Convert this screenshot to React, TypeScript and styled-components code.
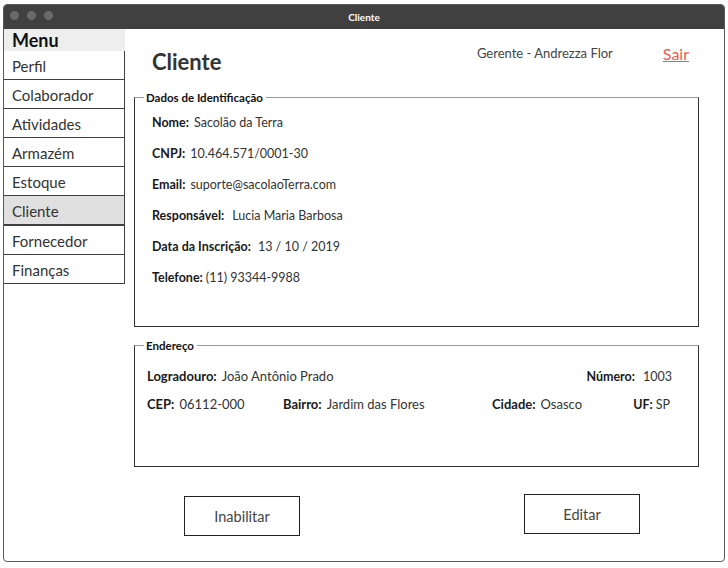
import React from "react";
import styled, { createGlobalStyle } from "styled-components";

const GlobalStyle = createGlobalStyle`
  body {
    margin: 0;
    background: #ffffff;
    font-family: "Lato", "Open Sans", sans-serif;
  }
`;

const Window = styled.div`
  margin: 4px 3px 0 3px;
  width: 722px;
  height: 558px;
  box-sizing: border-box;
  border: 1px solid #595959;
  border-radius: 4px;
  overflow: hidden;
  display: flex;
  flex-direction: column;
`;

const TitleBar = styled.div`
  height: 24px;
  flex-shrink: 0;
  background: #404040;
  display: flex;
  align-items: center;
  position: relative;
  justify-content: center;
  color: #ffffff;
  font-size: 10px;
  font-weight: 700;
`;

const Lights = styled.div`
  position: absolute;
  left: 6px;
  top: 6px;
  display: flex;
  gap: 8px;
`;

const Light = styled.span`
  width: 9px;
  height: 9px;
  border-radius: 50%;
  background: #6a6a6a;
`;

const Body = styled.div`
  flex: 1;
  display: flex;
`;

const Sidebar = styled.nav`
  width: 121px;
  flex-shrink: 0;
  display: flex;
  flex-direction: column;
`;

const MenuHeader = styled.div`
  height: 22px;
  background: #eeeeee;
  padding-left: 8px;
  font-size: 18px;
  font-weight: 700;
  line-height: 23px;
  color: #111;
`;

const MenuItem = styled.div<{ $active?: boolean }>`
  height: 28px;
  box-sizing: content-box;
  border-right: 1px solid #404040;
  border-bottom: ${(p) => (p.$active ? "2px" : "1px")} solid #404040;
  background: ${(p) => (p.$active ? "#e0e0e0" : "#ffffff")};
  padding-left: 8px;
  font-size: 15px;
  line-height: 30px;
  color: #333;

  &:first-of-type {
    border-top: 1px solid #404040;
  }
`;

const Main = styled.main`
  flex: 1;
  padding: 0 25px 0 9px;
  display: flex;
  flex-direction: column;
`;

const Header = styled.div`
  display: flex;
  align-items: flex-start;
  height: 62px;
  padding-left: 18px;
`;

const Title = styled.h1`
  margin: 19px 0 0 0;
  font-size: 22px;
  font-weight: 700;
  color: #333;
  flex: 1;
`;

const User = styled.span`
  margin-top: 16px;
  font-size: 13px;
  color: #444;
`;

const Logout = styled.a`
  margin: 15px 10px 0 50px;
  font-size: 16px;
  color: #f05a4f;
  text-decoration: underline;
`;

const Group = styled.fieldset<{ $height: number }>`
  margin: 0;
  height: ${(p) => p.$height}px;
  box-sizing: border-box;
  border: 1px solid #333;
  border-top-color: #999;
  padding: 0 12px;
`;

const Legend = styled.legend`
  margin-left: -3px;
  padding: 0 3px 0 2px;
  font-size: 11.5px;
  font-weight: 700;
  color: #111;
`;

const IdList = styled.div`
  display: flex;
  flex-direction: column;
  gap: 14px;
  padding: 10px 0 0 5px;
`;

const Field = styled.div<{ $gap?: number; $size?: number }>`
  display: flex;
  gap: ${(p) => p.$gap ?? 5}px;
  font-size: ${(p) => p.$size ?? 12.5}px;
  line-height: 17px;
  color: #333;
  white-space: nowrap;
`;

const Label = styled.span`
  font-weight: 700;
  color: #1a1a1a;
`;

const Spacer = styled.div<{ $h: number }>`
  height: ${(p) => p.$h}px;
  flex-shrink: 0;
`;

const AddressRow = styled.div`
  display: flex;
  justify-content: space-between;
  padding: 16px 14px 0 0;
`;

const AddressGrid = styled.div`
  display: grid;
  grid-template-columns: 136px 209px 1fr auto;
  padding: 11px 16px 0 0;
`;

const Actions = styled.div`
  display: flex;
  justify-content: space-between;
  padding: 0 59px 0 50px;
  align-items: flex-start;
`;

const Button = styled.button<{ $offset?: number }>`
  width: 116px;
  height: 40px;
  margin-top: ${(p) => p.$offset ?? 0}px;
  background: #fff;
  border: 1px solid #222;
  font-family: inherit;
  font-size: 14.5px;
  color: #444;
`;

const menu = ["Perfil", "Colaborador", "Atividades", "Armazém", "Estoque", "Cliente", "Fornecedor", "Finanças"];

export default function App() {
  return (
    <>
      <GlobalStyle />
      <Window>
        <TitleBar>
          <Lights>
            <Light />
            <Light />
            <Light />
          </Lights>
          Cliente
        </TitleBar>
        <Body>
          <Sidebar>
            <MenuHeader>Menu</MenuHeader>
            {menu.map((item) => (
              <MenuItem key={item} $active={item === "Cliente"}>
                {item}
              </MenuItem>
            ))}
          </Sidebar>
          <Main>
            <Header>
              <Title>Cliente</Title>
              <User>Gerente - Andrezza Flor</User>
              <Logout>Sair</Logout>
            </Header>
            <Group $height={236}>
              <Legend>Dados de Identificação</Legend>
              <IdList>
                <Field>
                  <Label>Nome:</Label> Sacolão da Terra
                </Field>
                <Field>
                  <Label>CNPJ:</Label> 10.464.571/0001-30
                </Field>
                <Field>
                  <Label>Email:</Label> suporte@sacolaoTerra.com
                </Field>
                <Field $gap={8}>
                  <Label>Responsável:</Label> Lucia Maria Barbosa
                </Field>
                <Field $gap={7}>
                  <Label>Data da Inscrição:</Label> 13 / 10 / 2019
                </Field>
                <Field $gap={3}>
                  <Label>Telefone:</Label> (11) 93344-9988
                </Field>
              </IdList>
            </Group>
            <Spacer $h={12} />
            <Group $height={128}>
              <Legend>Endereço</Legend>
              <AddressRow>
                <Field $size={13}>
                  <Label>Logradouro:</Label> João Antônio Prado
                </Field>
                <Field $gap={8} $size={12.5}>
                  <Label>Número:</Label> 1003
                </Field>
              </AddressRow>
              <AddressGrid>
                <Field $size={13}>
                  <Label>CEP:</Label> 06112-000
                </Field>
                <Field $size={13}>
                  <Label>Bairro:</Label> Jardim das Flores
                </Field>
                <Field $size={13}>
                  <Label>Cidade:</Label> Osasco
                </Field>
                <Field $gap={3} $size={12.5}>
                  <Label>UF:</Label> SP
                </Field>
              </AddressGrid>
            </Group>
            <Spacer $h={27} />
            <Actions>
              <Button $offset={2}>Inabilitar</Button>
              <Button>Editar</Button>
            </Actions>
          </Main>
        </Body>
      </Window>
    </>
  );
}
